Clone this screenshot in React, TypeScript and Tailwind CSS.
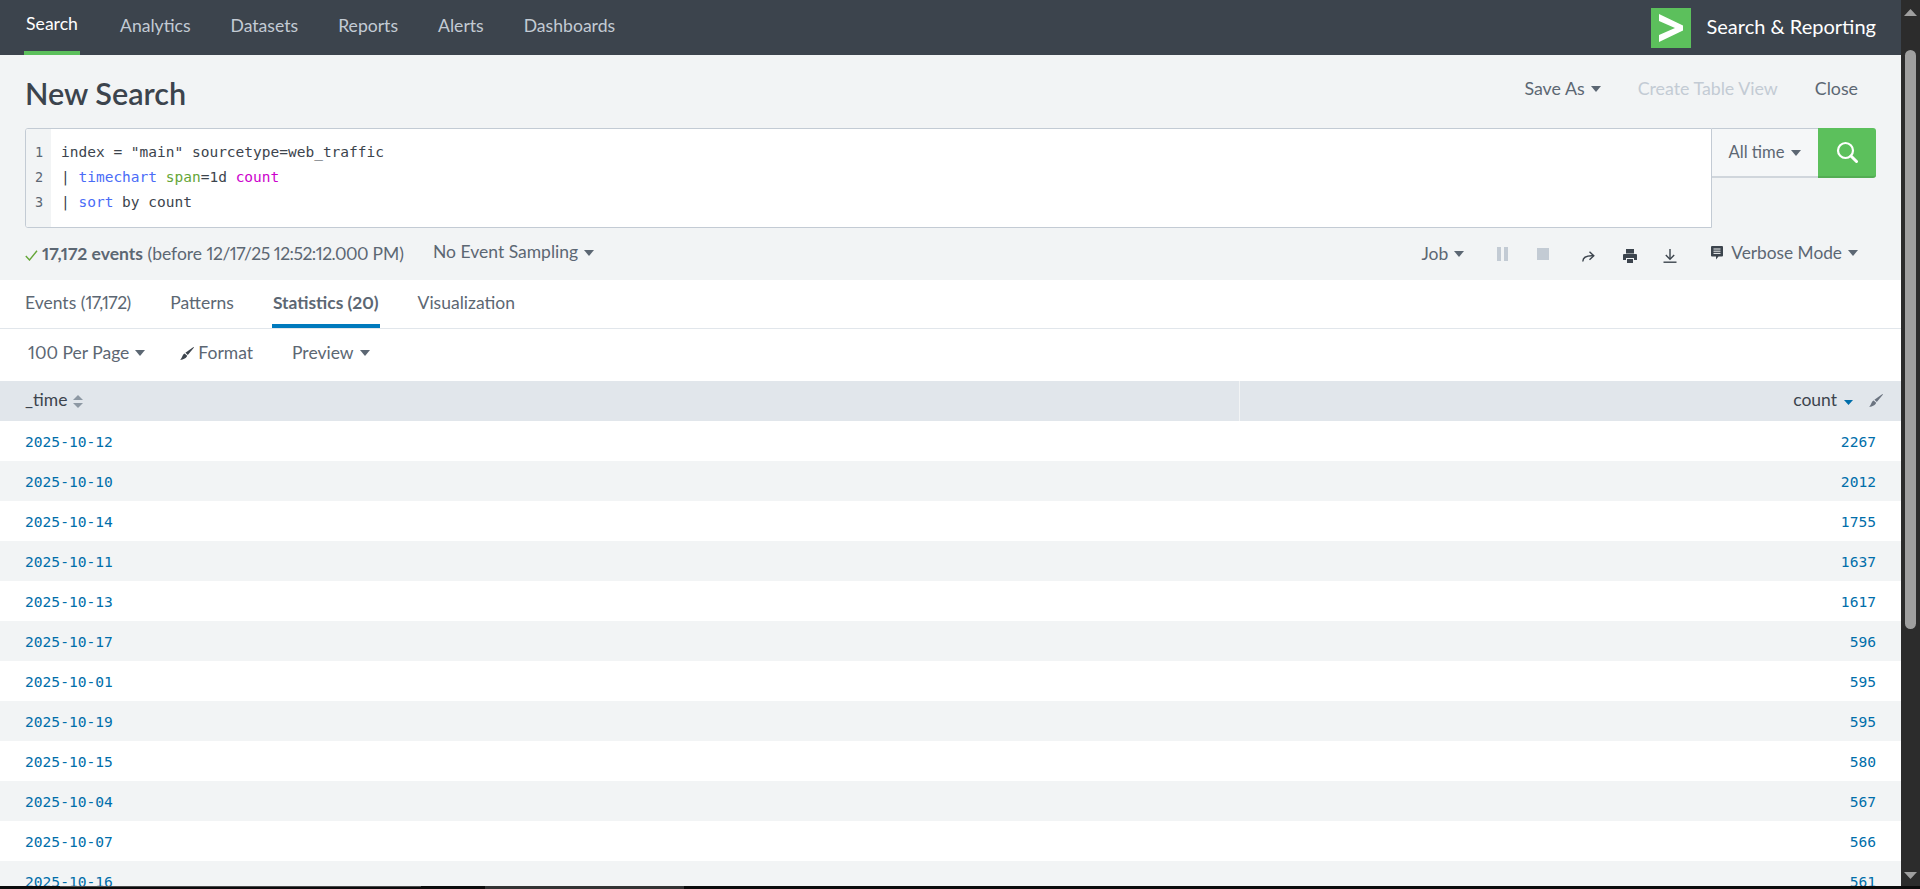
const rows: [string, string][] = [
  ["2025-10-12", "2267"],
  ["2025-10-10", "2012"],
  ["2025-10-14", "1755"],
  ["2025-10-11", "1637"],
  ["2025-10-13", "1617"],
  ["2025-10-17", "596"],
  ["2025-10-01", "595"],
  ["2025-10-19", "595"],
  ["2025-10-15", "580"],
  ["2025-10-04", "567"],
  ["2025-10-07", "566"],
  ["2025-10-16", "561"],
];

function Caret({ color = "#5c6773" }: { color?: string }) {
  return (
    <svg width="10" height="6" viewBox="0 0 10 6" className="shrink-0">
      <polygon points="0,0 10,0 5,6" fill={color} />
    </svg>
  );
}

function Brush({ color = "#3c444d" }: { color?: string }) {
  return (
    <svg width="14" height="13" viewBox="0 0 14 13" className="shrink-0">
      <path d="M13.5 0 L14 0.6 L7.8 8 L5.4 5.8 Z" fill={color} />
      <path d="M4.6 6.4 L7.2 8.8 C6.6 11 3.6 12.8 0 13 C2 11.4 2.2 7.6 4.6 6.4 Z" fill={color} />
    </svg>
  );
}

const nav = ["Analytics", "Datasets", "Reports", "Alerts", "Dashboards"];

export default function App() {
  return (
    <div className="w-[1920px] h-[889px] overflow-hidden flex flex-col bg-black font-['Lato','Liberation_Sans',sans-serif] proportional-nums text-[#5c6773]">
      <div className="flex flex-1 min-h-0">
        <div className="w-[1901px] bg-[#f2f4f5] overflow-hidden">
          {/* top nav */}
          <header className="h-[55px] bg-[#3c444d] flex items-center justify-between pl-[24px] pr-[25px]">
            <nav className="flex gap-[40px] h-full text-[17.6px]">
              <a className="h-full w-[56px] flex justify-center items-center pb-[3px] border-b-4 border-[#5cc05c] text-white">Search</a>
              {nav.map((n) => (
                <a key={n} className="h-full flex items-center pb-[3px] text-[#c3cbd4]">{n}</a>
              ))}
            </nav>
            <div className="flex items-center gap-[16px]">
              <div className="w-[40px] h-[40px] bg-[#5cc05c] flex items-center justify-center">
                <svg width="24" height="28" viewBox="0 0 24 28">
                  <polygon points="0,0 24,11.5 24,16.5 0,28 0,21 16,14 0,7" fill="#fff" />
                </svg>
              </div>
              <span className="text-[20px] text-white pb-[4px]">Search &amp; Reporting</span>
            </div>
          </header>

          {/* title */}
          <div className="h-[73px] flex items-center justify-between pl-[25px] pr-[43px]">
            <h1 className="text-[30.6px] font-semibold text-[#3c444d] leading-none mt-[6px]">New Search</h1>
            <div className="flex items-center text-[17.8px] mb-[6px]">
              <span className="flex items-center gap-[6px]">Save As <Caret /></span>
              <span className="ml-[37px] text-[#c3cbd4]">Create Table View</span>
              <span className="ml-[37px]">Close</span>
            </div>
          </div>

          {/* search bar */}
          <div className="flex items-start pl-[25px] pr-[25px]">
            <div className="w-[1687px] h-[100px] bg-white border border-[#c3cbd4] rounded-l-[3px] flex overflow-hidden font-['DejaVu_Sans_Mono',monospace] text-[14.5px] leading-[25px]">
              <div className="w-[25px] bg-[#f2f4f5] pt-[11px] pl-[9px] text-[#5c6773] text-[13.5px]">
                <div>1</div>
                <div>2</div>
                <div>3</div>
              </div>
              <div className="pl-[10px] pt-[11px] text-[#3c444d] whitespace-pre">
                <div>index = "main" sourcetype=web_traffic</div>
                <div>| <span className="text-[#4a6cf7]">timechart</span> <span className="text-[#65a637]">span</span>=1d <span className="text-[#cc00cc]">count</span></div>
                <div>| <span className="text-[#4a6cf7]">sort</span> by count</div>
              </div>
            </div>
            <div className="w-[106px] h-[50px] flex items-center justify-center gap-[7px] border-b-2 border-[#d0d6dc] text-[16.6px] bg-[#f5f7f8] border-t border-t-[#c3cbd4]">
              All time <Caret />
            </div>
            <div className="w-[58px] h-[50px] bg-[#5cc05c] border-b-2 border-[#53ad53] rounded-r-[3px] flex items-center justify-center">
              <svg width="22" height="22" viewBox="0 0 22 22" fill="none" stroke="#fff">
                <circle cx="9.5" cy="9.5" r="7.5" strokeWidth="2.2" />
                <path d="M15 15 L20.5 20.5" strokeWidth="3" strokeLinecap="round" />
              </svg>
            </div>
          </div>

          {/* job row */}
          <div className="h-[52px] flex items-center pl-[25px] pr-[43px] text-[17.5px]">
            <svg width="13" height="11" viewBox="0 0 13 11" fill="none" stroke="#65a637" strokeWidth="1.4" className="mr-[4px] mt-[3px] shrink-0">
              <path d="M0.8 6 L4.5 10 L12 0.8" />
            </svg>
            <span>
              <b className="font-bold">17,172 events</b>{" "}
              (before <span className="tracking-[-0.5px]">12/17/25 12:52:12.000</span> PM)
            </span>
            <span className="ml-[29px] flex items-center gap-[6px] -mt-[3px]">No Event Sampling <Caret /></span>
            <div className="flex-1" />
            <span className="flex items-center gap-[6px]">Job <Caret /></span>
            <svg width="11" height="14" viewBox="0 0 11 14" fill="#c3cbd4" className="ml-[33px]">
              <rect x="0" y="0" width="4" height="14" />
              <rect x="7" y="0" width="4" height="14" />
            </svg>
            <div className="ml-[29px] w-[12px] h-[12px] bg-[#c3cbd4]" />
            <svg width="13" height="11" viewBox="0 0 13 11" fill="none" stroke="#3c444d" strokeWidth="1.4" className="ml-[33px] mt-[4px]">
              <path d="M0.8 10.5 C1 6 4 4.5 11 4.8" />
              <path d="M7.5 0.8 L11.8 4.8 L7.5 8.8" />
            </svg>
            <svg width="14" height="14" viewBox="0 0 14 14" fill="#3c444d" className="ml-[28px] mt-[3px]">
              <rect x="3" y="0" width="8" height="4.5" />
              <path d="M0 6 a1 1 0 0 1 1 -1 h12 a1 1 0 0 1 1 1 v5 h-3 v-2 h-8 v2 h-3 z" />
              <rect x="4" y="10" width="6" height="4" />
            </svg>
            <svg width="14" height="14" viewBox="0 0 14 14" fill="none" stroke="#3c444d" strokeWidth="1.4" className="ml-[26px] mt-[3px]">
              <path d="M7 0 V9.5" />
              <path d="M2.8 6 L7 10.2 L11.2 6" />
              <path d="M0.5 13.2 H13.5" />
            </svg>
            <span className="ml-[34px] flex items-center -mt-[3px]">
              <svg width="12" height="14" viewBox="0 0 12 14" className="mr-[8px]">
                <path d="M1 0 H11 a1 1 0 0 1 1 1 V9.5 a1 1 0 0 1 -1 1 H7.5 L5 13.5 V10.5 H1 a1 1 0 0 1 -1 -1 V1 a1 1 0 0 1 1 -1 Z" fill="#3c444d" />
                <path d="M2.5 3 H9.5 M2.5 5.2 H9.5 M2.5 7.4 H9.5" stroke="#f2f4f5" strokeWidth="1" />
              </svg>
              <span className="text-[17.3px]">Verbose Mode</span>
              <span className="ml-[6px]"><Caret /></span>
            </span>
          </div>

          {/* tabs */}
          <div className="h-[49px] bg-white border-b border-[#e1e6eb] flex pl-[25px] text-[17.5px] gap-[39px]">
            <span className="h-[48px] flex items-center pb-[2px] whitespace-pre">Events (<span className="tracking-[-0.5px]">17,172</span>)</span>
            <span className="h-[48px] flex items-center pb-[2px]">Patterns</span>
            <span className="h-[48px] -mx-[1px] px-[1px] flex items-center pt-[2px] border-b-4 border-[#007abd] font-bold text-[#5c6773] text-[17.4px]">Statistics (20)</span>
            <span className="h-[48px] flex items-center pb-[2px]">Visualization</span>
          </div>

          {/* toolbar */}
          <div className="h-[52px] bg-white flex items-center pl-[28px] pb-[4px] text-[17.5px]">
            <span className="flex items-center gap-[6px]">100 Per Page <Caret /></span>
            <span className="ml-[35px] flex items-center gap-[4px]"><Brush />Format</span>
            <span className="ml-[39px] flex items-center gap-[6px]">Preview <Caret /></span>
          </div>

          {/* table */}
          <div className="h-[40px] bg-[#e1e6eb] flex text-[17.5px] text-[#3c444d]">
            <div className="w-[1240px] border-r border-[#f2f4f5] flex items-center pl-[25px] pb-[2px] gap-[6px]">
              _time
              <svg width="10" height="13" viewBox="0 0 10 13" className="mt-[2px]">
                <polygon points="5,0 10,5 0,5" fill="#8d98a3" />
                <polygon points="0,8 10,8 5,13" fill="#8d98a3" />
              </svg>
            </div>
            <div className="flex-1 flex items-center justify-end pr-[18px] pb-[2px]">
              count
              <svg width="9" height="5" viewBox="0 0 9 5" className="ml-[7px] mt-[5px]">
                <polygon points="0,0 9,0 4.5,5" fill="#006eaa" />
              </svg>
              <span className="ml-[16px]"><Brush color="#6b7480" /></span>
            </div>
          </div>
          {rows.map(([d, c], i) => (
            <div
              key={d}
              className={`h-[40px] flex items-center justify-between pl-[25px] pr-[25px] pt-[1px] font-['DejaVu_Sans_Mono',monospace] text-[14.6px] text-[#006eaa] ${i % 2 === 0 ? "bg-white" : "bg-[#f2f4f5]"}`}
            >
              <span>{d}</span>
              <span>{c}</span>
            </div>
          ))}
        </div>

        {/* scrollbar */}
        <div className="w-[19px] bg-[#2c2c2c] flex flex-col items-center">
          <svg width="13" height="7" viewBox="0 0 13 7" className="mt-[9px] shrink-0">
            <polygon points="6.5,0 13,7 0,7" fill="#9f9f9f" />
          </svg>
          <div className="mt-[34px] w-[11px] h-[579px] rounded-full bg-[#9f9f9f] shrink-0" />
          <div className="flex-1" />
          <svg width="13" height="7" viewBox="0 0 13 7" className="mb-[7px] shrink-0">
            <polygon points="0,0 13,0 6.5,7" fill="#9f9f9f" />
          </svg>
        </div>
      </div>
      <div className="h-[3px] bg-[#0c0c0c] shrink-0 flex">
        <div className="w-[60px]" />
        <div className="w-[361px] border-t border-[#4a4a4a]" />
        <div className="w-[64px]" />
        <div className="w-[199px] bg-[#333333]" />
      </div>
    </div>
  );
}
